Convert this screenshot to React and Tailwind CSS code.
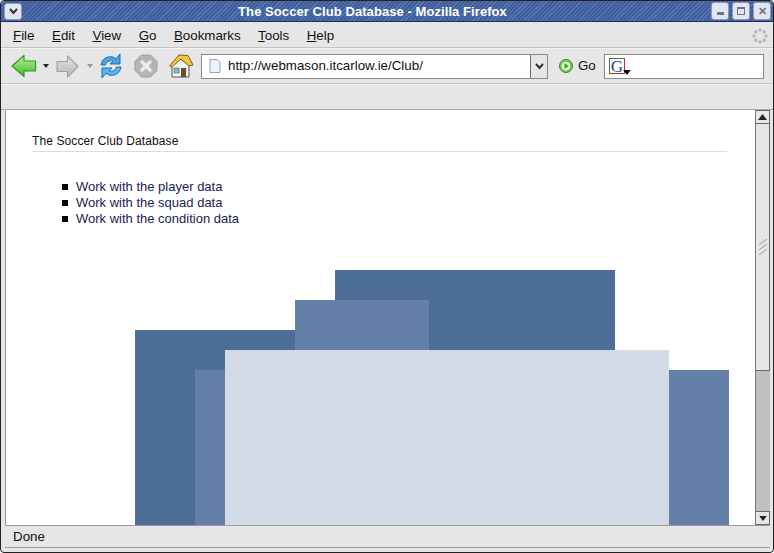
import React from 'react';

const menus = [
  ['F', 'ile'],
  ['E', 'dit'],
  ['V', 'iew'],
  ['G', 'o'],
  ['B', 'ookmarks'],
  ['T', 'ools'],
  ['H', 'elp'],
];

const links = [
  'Work with the player data',
  'Work with the squad data',
  'Work with the condition data',
];

const WinButton = ({ children }) => (
  <div className="w-[18px] h-[18px] rounded-[3px] border border-[#8e99b5] bg-[#e3e6f0] flex items-center justify-center text-[#6a7388]">
    {children}
  </div>
);

const BackArrow = () => (
  <svg width="26" height="24" viewBox="0 0 26 24">
    <defs>
      <linearGradient id="back" x1="0" y1="0" x2="0" y2="1">
        <stop offset="0" stopColor="#c4f59a" />
        <stop offset="1" stopColor="#35b825" />
      </linearGradient>
    </defs>
    <path d="M1 12 L13 1.500 V7 H24.500 V17 H13 V22.500 Z" fill="url(#back)" stroke="#2f9a22" strokeWidth="1.2" strokeLinejoin="round" />
  </svg>
);

const ForwardArrow = () => (
  <svg width="23" height="23" viewBox="0 0 23 23">
    <defs>
      <linearGradient id="forward" x1="0" y1="0" x2="0" y2="1">
        <stop offset="0" stopColor="#e2e2e2" />
        <stop offset="1" stopColor="#b8b8b8" />
      </linearGradient>
    </defs>
    <path d="M22 11.500 L11.500 1 V6.500 H1 V16.500 H11.500 V22 Z" fill="url(#forward)" stroke="#a0a0a0" strokeWidth="1.1" strokeLinejoin="round" />
  </svg>
);

const SmallCaret = ({ color, w = 6, h = 4 }) => (
  <svg width={w} height={h} viewBox="0 0 6 4"><path d="M0 0H6L3 4Z" fill={color} /></svg>
);

const SmallCaretUp = () => (
  <svg width="9" height="6" viewBox="0 0 9 6"><path d="M0 6H9L4.500 0Z" fill="#222" /></svg>
);

const Reload = () => (
  <svg width="24" height="26" viewBox="0 0 24 26">
    <path d="M2 12 C3 5 9 3 14 4 L17 6 L21 1 V11 H11 L14 8 C10 7 7 9 6.500 12 Z" fill="#4aa3e6" stroke="#1d6fb8" strokeWidth="1" strokeLinejoin="round" />
    <path d="M22 14 C21 21 15 23 10 22 L7 20 L3 25 V15 H13 L10 18 C14 19 17 17 17.500 14 Z" fill="#58b4ee" stroke="#1d6fb8" strokeWidth="1" strokeLinejoin="round" />
  </svg>
);

const Stop = () => (
  <svg width="24" height="24" viewBox="0 0 24 24">
    <path d="M7.500 1 H16.500 L23 7.500 V16.500 L16.500 23 H7.500 L1 16.500 V7.500 Z" fill="#b5b5b5" stroke="#9c9c9c" />
    <path d="M8 8 L16 16 M16 8 L8 16" stroke="#ececec" strokeWidth="3.4" strokeLinecap="round" />
  </svg>
);

const Home = () => (
  <svg width="26" height="26" viewBox="0 0 26 26">
    <path d="M4 12 V24 H21 V12 L12 6 Z" fill="#f4f4f0" stroke="#555" strokeWidth="1" />
    <path d="M1.500 13 L11 2 L20 2.500 L25 12 L21 13 L13 6 L4 14 Z" fill="#f2c53d" stroke="#7a6420" strokeWidth="1" strokeLinejoin="round" />
    <rect x="13" y="15" width="5" height="9" fill="#6f4a2a" />
    <rect x="6" y="15" width="5" height="5" fill="#8fb3d9" stroke="#555" strokeWidth="0.6" />
  </svg>
);

const Throbber = () => (
  <svg width="16" height="16" viewBox="0 0 16 16" fill="#b8b8b8">
    <circle cx="8" cy="2" r="1.800" />
    <circle cx="12.300" cy="3.700" r="1.800" />
    <circle cx="14" cy="8" r="1.800" />
    <circle cx="12.300" cy="12.300" r="1.800" />
    <circle cx="8" cy="14" r="1.800" />
    <circle cx="3.700" cy="12.300" r="1.800" />
    <circle cx="2" cy="8" r="1.800" />
    <circle cx="3.700" cy="3.700" r="1.800" />
  </svg>
);

const ChevronDown = () => (
  <svg width="9" height="7" viewBox="0 0 9 7" fill="none" stroke="#333" strokeWidth="2">
    <path d="M1 1 L4.500 5 L8 1" />
  </svg>
);

const App = () => {
  return (
    <div className="w-[774px] h-[553px] bg-[#e6e6e6] border border-[#222] rounded-[4px] overflow-hidden flex flex-col font-['Liberation_Sans',sans-serif] text-black">
      {/* Title bar */}
      <div className="h-[21px] shrink-0 flex items-center border-b border-[#1c2f5c] bg-[repeating-linear-gradient(135deg,#3f5f9c_0px,#3f5f9c_2px,#5877b1_2px,#5877b1_3px)]">
        <div className="ml-[3px] w-[18px] h-[17px] rounded-[3px] border border-[#8e99b5] bg-[#e3e6f0] flex items-center justify-center">
          <ChevronDown />
        </div>
        <div className="flex-1 pt-[1px] pl-[12px] text-center text-white font-bold text-[13px] tracking-[0.07px]">
          The Soccer Club Database - Mozilla Firefox
        </div>
        <div className="flex gap-[3px] mr-[2px]">
          <WinButton><div className="w-[7px] h-[3px] bg-[#6a7388] mt-[5px]" /></WinButton>
          <WinButton><div className="w-[8px] h-[8px] border border-[#6a7388] border-t-2" /></WinButton>
          <WinButton><span className="text-[11px] font-bold leading-none">✕</span></WinButton>
        </div>
      </div>

      {/* Menu bar */}
      <div className="h-[26px] shrink-0 flex items-center pl-[12px] pr-[5px] pt-[2px] gap-[17.500px] border-b border-[#c4c4c4] text-[13.330px] text-[#111]">
        {menus.map(([key, rest]) => (
          <span key={key}><span className="underline">{key}</span>{rest}</span>
        ))}
        <div className="ml-auto"><Throbber /></div>
      </div>

      {/* Navigation toolbar */}
      <div className="h-[36px] shrink-0 flex items-center pl-[10px] border-b border-[#c4c4c4] border-t border-t-[#f4f4f4]">
        <BackArrow />
        <div className="ml-[6px]"><SmallCaret color="#222" /></div>
        <div className="ml-[7px]"><ForwardArrow /></div>
        <div className="ml-[8px]"><SmallCaret color="#999" /></div>
        <div className="ml-[6px]"><Reload /></div>
        <div className="ml-[11px]"><Stop /></div>
        <div className="ml-[10px]"><Home /></div>
        <div className="ml-[7px] w-[347px] h-[25px] flex bg-white border border-[#8a8a8a]">
          <div className="flex-1 flex items-center pl-[7px]">
            <svg width="12" height="14" viewBox="0 0 12 14">
              <path d="M1 .5 H8 L11 3.500 V13.500 H1 Z" fill="#eef3fb" stroke="#8ea4c8" />
            </svg>
            <span className="ml-[7px] text-[13.330px] text-[#111]">http://webmason.itcarlow.ie/Club/</span>
          </div>
          <div className="w-[17px] bg-[#e6e6e6] border-l border-[#6e6e6e] flex items-center justify-center">
            <ChevronDown />
          </div>
        </div>
        <svg width="16" height="16" viewBox="0 0 16 16" className="ml-[10px]">
          <circle cx="8" cy="8" r="6.500" fill="#6fd04a" stroke="#2e8f22" />
          <circle cx="8" cy="8" r="4.200" fill="#f2f7ee" />
          <path d="M6.300 5 L11 8 L6.300 11 Z" fill="#3aa52c" />
        </svg>
        <span className="ml-[4px] text-[13.330px] text-[#111]">Go</span>
        <div className="ml-[8px] w-[160px] h-[25px] bg-white border border-[#8a8a8a] flex items-center pl-[4px]">
          <div className="w-[16px] h-[16px] border border-[#3b7a3b] border-r-[#b03030] border-b-[#b03030] bg-white flex items-center justify-center text-[#1d3fa8] text-[17px] leading-none font-['Liberation_Serif',serif]">G</div>
          <div className="ml-[-2px] mt-[12px]"><SmallCaret color="#000" w={8} h={5} /></div>
        </div>
      </div>

      {/* Bookmarks toolbar */}
      <div className="h-[26px] shrink-0 border-b border-[#a8a8a8] border-t border-t-[#f4f4f4]" />

      {/* Page and scrollbar */}
      <div className="h-[415px] shrink-0 flex ml-[4px] mr-[3px] bg-white border-l border-[#9a9a9a]">
        <div className="flex-1 relative overflow-hidden pl-[26px] pr-[28px] pt-[23px]">
          <h1 className="text-[12px] leading-[16px] pb-[2px] font-normal border-b border-[#dcdcdc] text-[#111] tracking-[0.1px]">
            The Soccer Club Database
          </h1>
          <ul className="mt-[27px] pl-[44px] text-[13px] leading-[16px] text-[#22225a]">
            {links.map((label) => (
              <li key={label} className="flex items-center">
                <span className="absolute left-[56px] w-[6px] h-[6px] bg-black" />
                {label}
              </li>
            ))}
          </ul>
          {/* overlapping header blocks */}
          <div className="absolute left-[329px] top-[160px] w-[280px] h-[300px] bg-[#4d6d99]" />
          <div className="absolute left-[129px] top-[220px] w-[300px] h-[300px] bg-[#4d6d99]" />
          <div className="absolute left-[289px] top-[190px] w-[134px] h-[300px] bg-[#647fa8]" />
          <div className="absolute left-[189px] top-[260px] w-[534px] h-[300px] bg-[#647fa8]" />
          <div className="absolute left-[219px] top-[240px] w-[444px] h-[300px] bg-[#d2dae5]" />
        </div>
        {/* Scrollbar */}
        <div className="w-[15px] shrink-0 flex flex-col bg-[#c0c0c0] border-l border-[#777]">
          <div className="h-[14px] shrink-0 bg-[#e6e6e6] border-b border-t border-r border-[#666] flex items-center justify-center">
            <SmallCaretUp />
          </div>
          <div className="h-[247px] shrink-0 bg-[#e6e6e6] border-b border-r border-[#666] flex items-center justify-center">
            <svg width="10" height="16" viewBox="0 0 10 16" stroke="#9a9a9a" strokeWidth="1">
              <path d="M1 6 L9 0 M1 11 L9 5 M1 16 L9 10" />
            </svg>
          </div>
          <div className="flex-1" />
          <div className="h-[14px] shrink-0 bg-[#e6e6e6] border border-l-0 border-[#666] flex items-center justify-center">
            <SmallCaret color="#222" w={8} h={5} />
          </div>
        </div>
      </div>

      {/* Status bar */}
      <div className="h-[23px] shrink-0 ml-[4px] mr-[3px] flex items-center pl-[8px] border-t border-[#9a9a9a] border-b border-b-[#9a9a9a] text-[13.330px] text-[#111]">
        Done
      </div>
    </div>
  );
};

export default App;
